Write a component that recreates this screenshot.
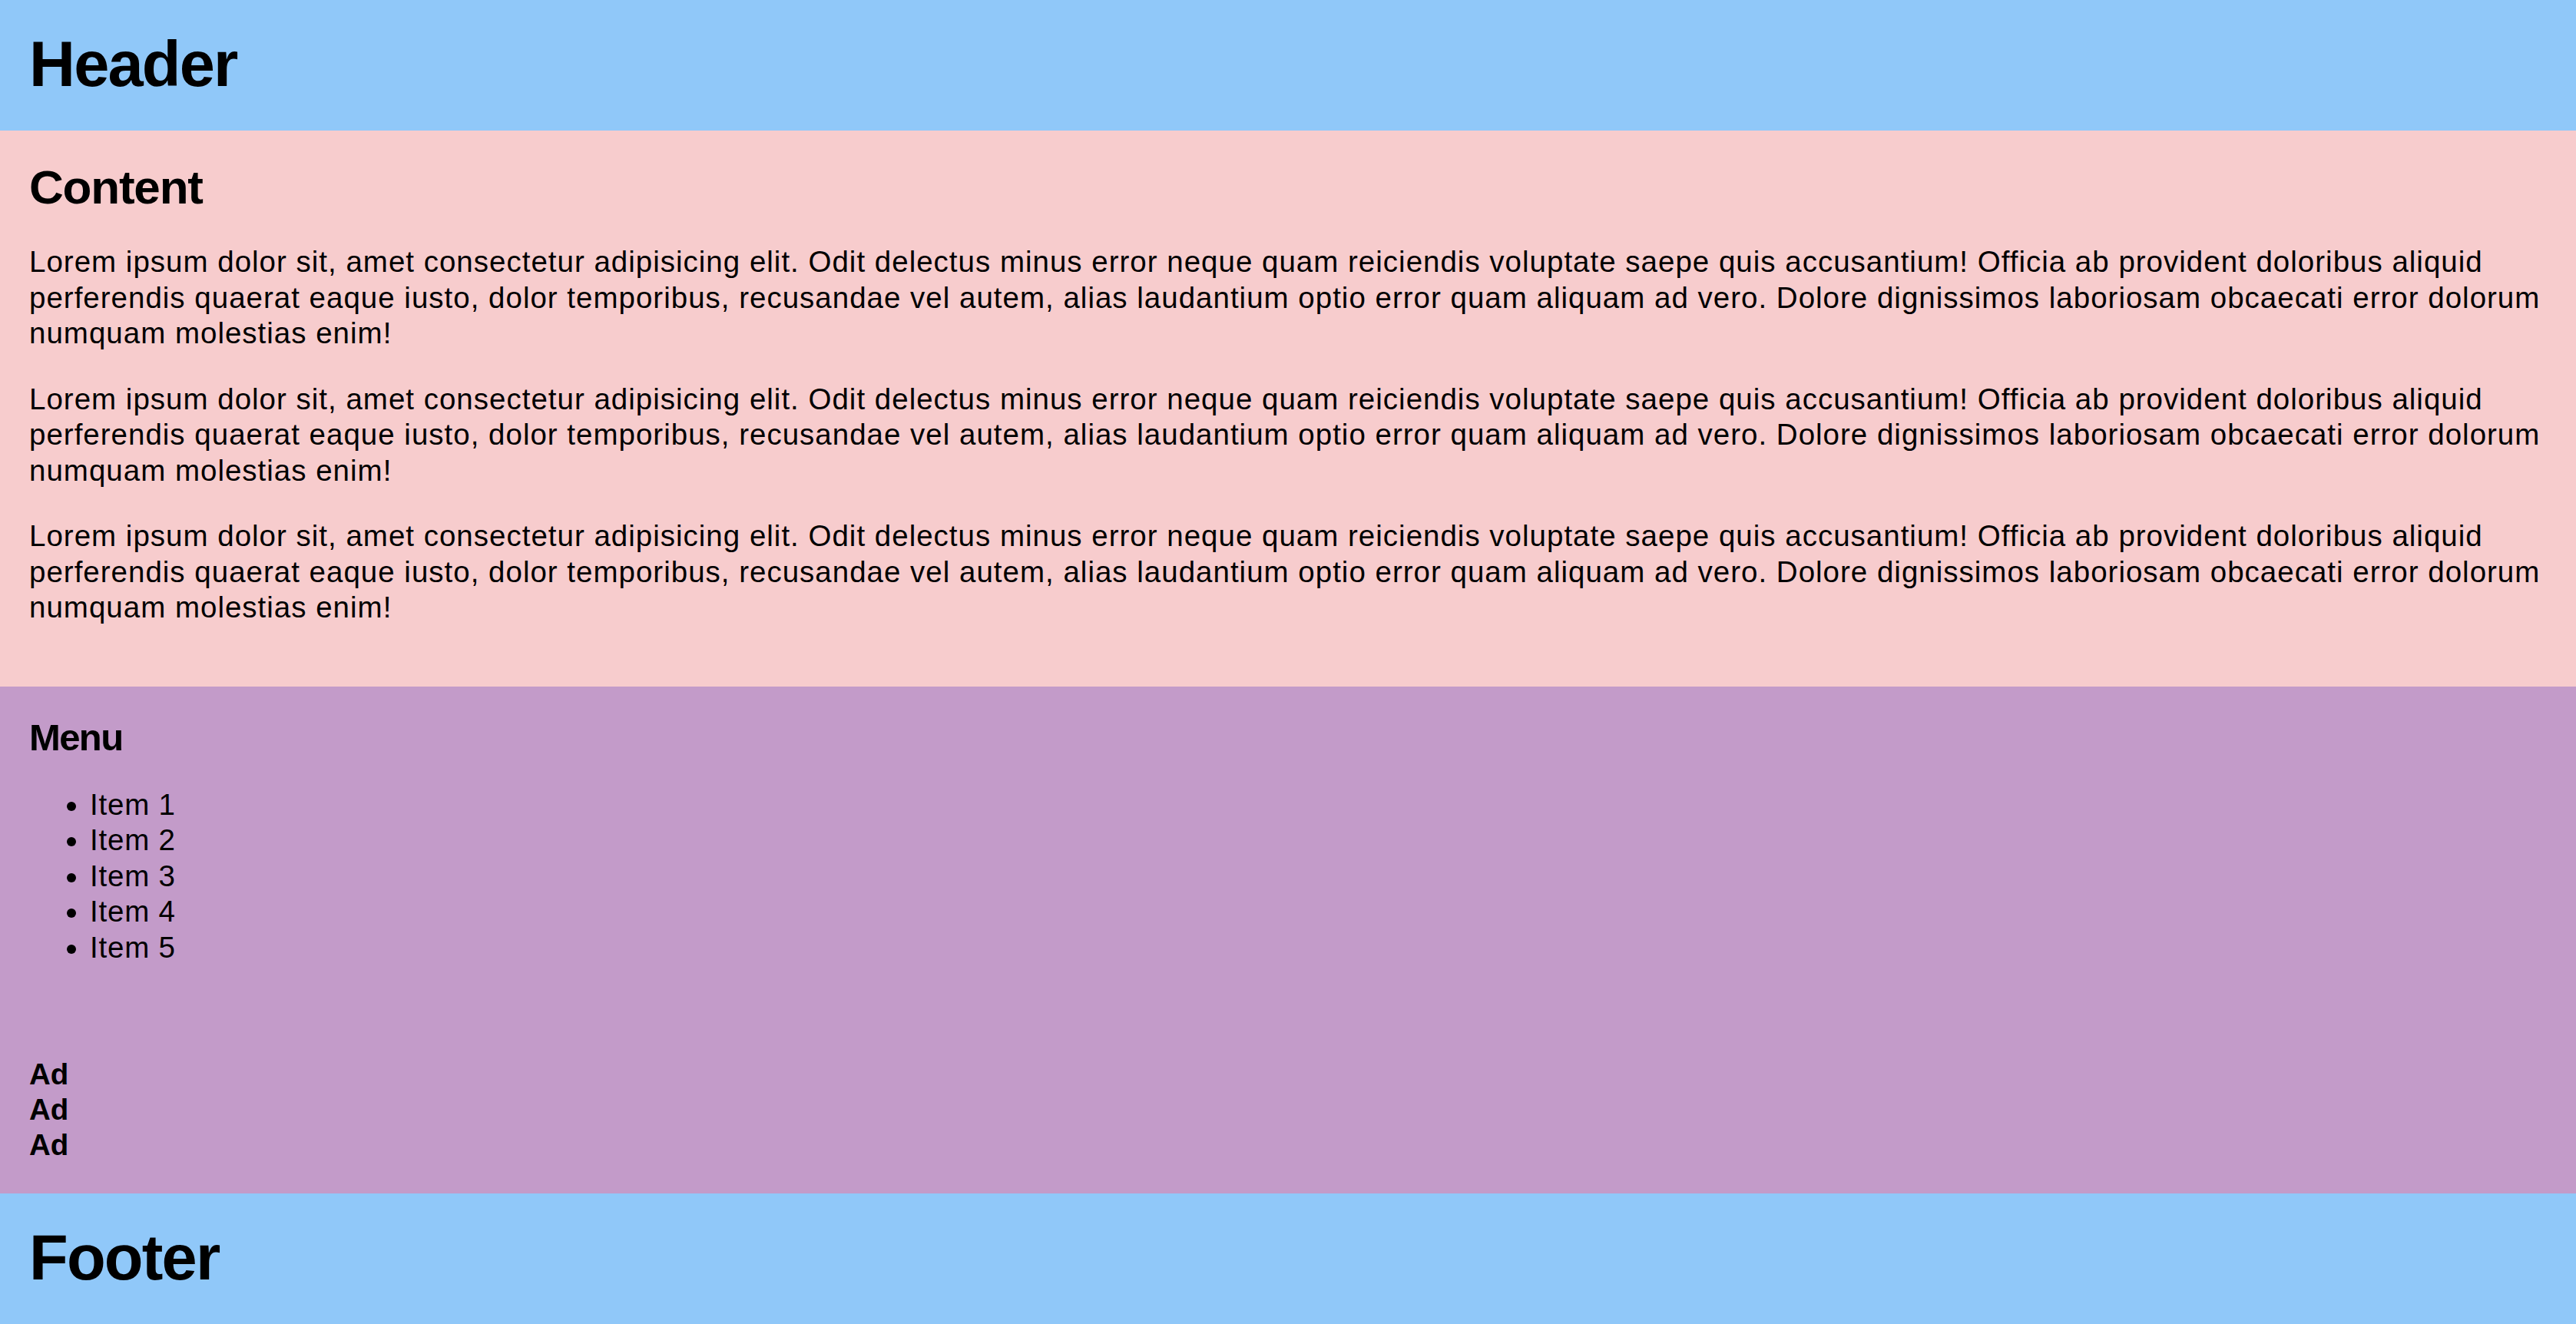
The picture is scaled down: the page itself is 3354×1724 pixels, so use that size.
const lorem =
  "Lorem ipsum dolor sit, amet consectetur adipisicing elit. Odit delectus minus error neque quam reiciendis voluptate saepe quis accusantium! Officia ab provident doloribus aliquid perferendis quaerat eaque iusto, dolor temporibus, recusandae vel autem, alias laudantium optio error quam aliquam ad vero. Dolore dignissimos laboriosam obcaecati error dolorum numquam molestias enim!";

const items = ["Item 1", "Item 2", "Item 3", "Item 4", "Item 5"];

export default function App() {
  return (
    <div className="font-['Liberation_Sans',Arial,sans-serif] text-black">
      <header className="bg-[#90c8f9] px-[38px] pt-[36px] pb-[39px]">
        <h1 className="text-[83px] font-bold leading-[95px] tracking-[-1.8px]">Header</h1>
      </header>

      <main className="bg-[#f7cccd] px-[38px] pt-[38px] pb-[40px]">
        <h2 className="text-[62px] font-bold leading-[71px] tracking-[-1.2px] mb-[39px]">Content</h2>
        {[0, 1, 2].map((i) => (
          <p key={i} className="text-[38.5px] leading-[46.5px] tracking-[1px] mb-[39px]">
            {lorem}
          </p>
        ))}
      </main>

      <aside className="bg-[#c39bc9] px-[38px] pt-[38px] pb-[40px]">
        <h3 className="text-[49px] font-bold leading-[56px] tracking-[-1.6px] mb-[37px]">Menu</h3>
        <ul className="list-disc pl-[79px] text-[38.5px] leading-[46.5px] tracking-[0.8px] mb-[119px]">
          {items.map((item) => (
            <li key={item}>{item}</li>
          ))}
        </ul>
        <div className="text-[38.5px] font-bold leading-[46px]">
          <div>Ad</div>
          <div>Ad</div>
          <div>Ad</div>
        </div>
      </aside>

      <footer className="bg-[#90c8f9] px-[38px] pt-[36px] pb-[39px]">
        <h1 className="text-[83px] font-bold leading-[95px] tracking-[-1.8px]">Footer</h1>
      </footer>
    </div>
  );
}
